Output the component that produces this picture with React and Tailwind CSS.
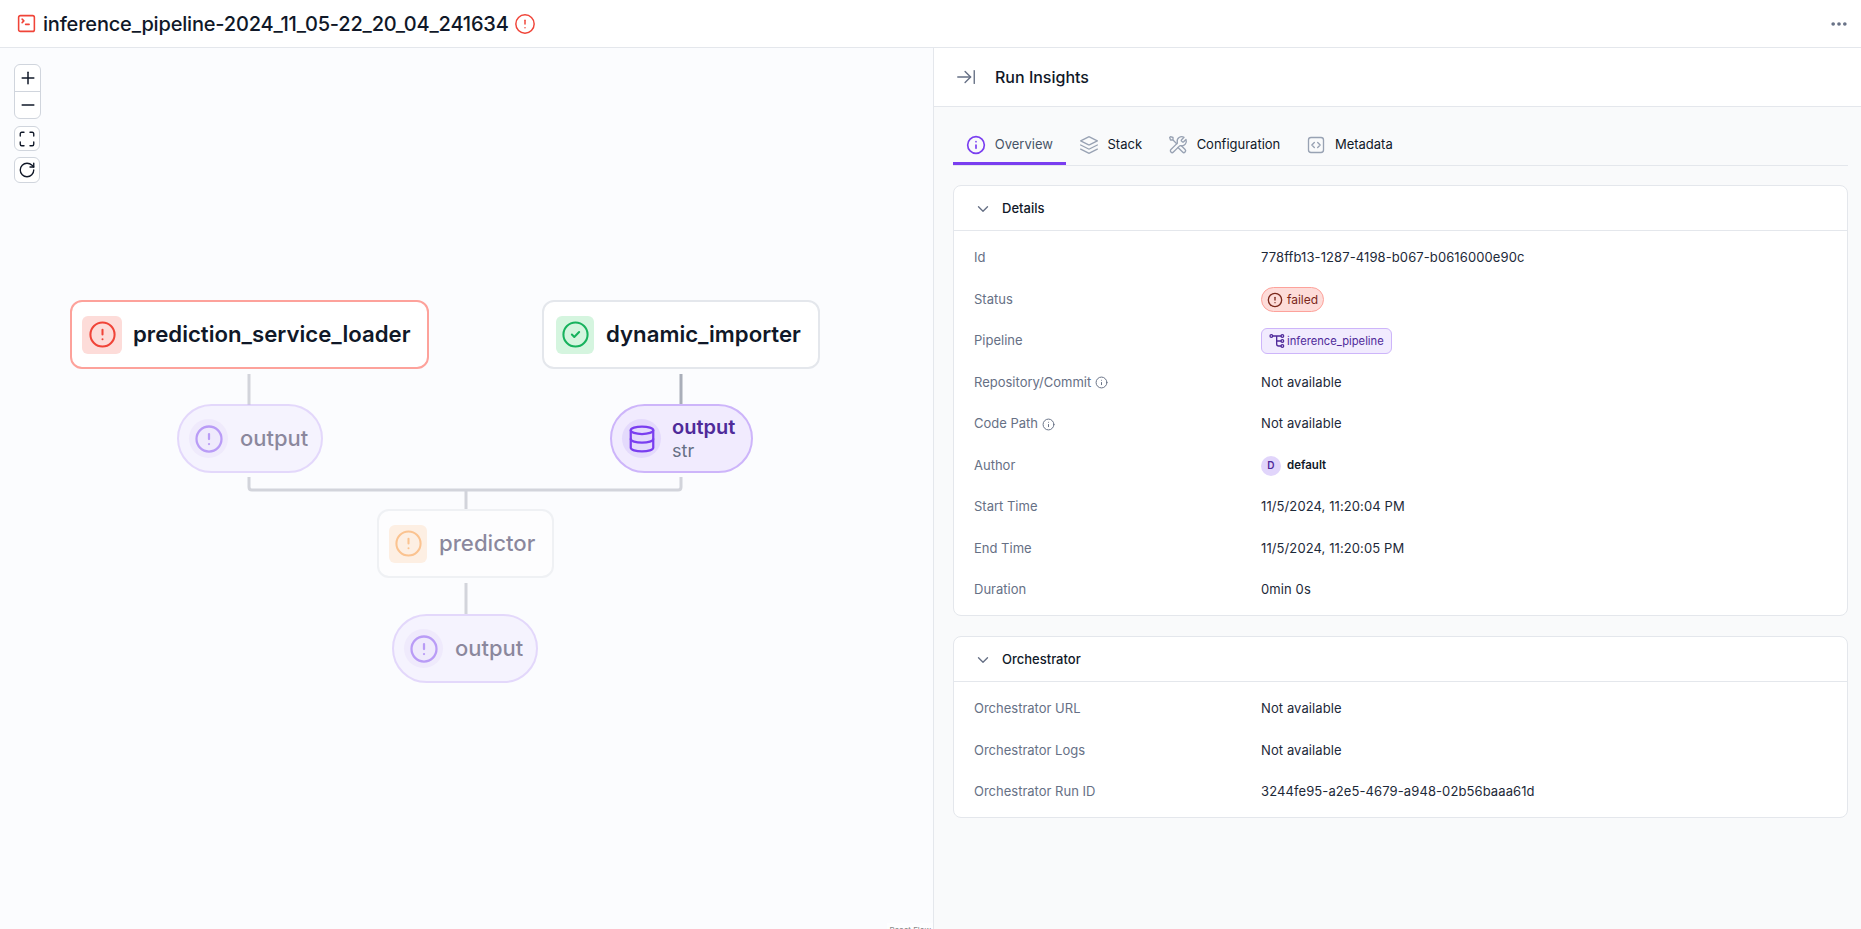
import React from 'react';
import {
  ArrowRightToLine,
  ChevronDown,
  CircleAlert,
  CircleCheck,
  Database,
  Ellipsis,
  Info,
  Maximize,
  Minus,
  Plus,
  RotateCw,
  SquareTerminal,
} from 'lucide-react';

const fontStyle = "font-['Inter','Noto_Sans',sans-serif]";

function LayersIcon({ className }) {
  return (
    <svg className={className} viewBox="0 0 24 24" fill="none" stroke="currentColor" strokeWidth="1.6" strokeLinecap="round" strokeLinejoin="round">
      <path d="M2 12l9.6 4.8c.2.1.6.1.8 0L22 12" />
      <path d="M2 17l9.6 4.8c.2.1.6.1.8 0L22 17" />
      <path d="M2 7l9.6-4.8c.2-.1.6-.1.8 0L22 7l-9.6 4.8c-.2.1-.6.1-.8 0L2 7Z" />
    </svg>
  );
}

function ToolIcon({ className }) {
  return (
    <svg className={className} viewBox="0 0 24 24" fill="none" stroke="currentColor" strokeWidth="1.6" strokeLinecap="round" strokeLinejoin="round">
      <path d="M6 6l4.5 4.5M6 6H3L2 3l1-1 3 1v3Z" />
      <path d="M19.26 2.74l-2.63 2.63c-.4.4-.59.59-.67.82a1 1 0 0 0 0 .62c.08.23.27.43.67.82l.24.24c.4.4.59.59.82.67a1 1 0 0 0 .62 0c.23-.08.43-.27.82-.67l2.46-2.46A5.5 5.5 0 0 1 15.43 12.9c-.49-.1-.73-.14-.88-.13-.16.02-.23.04-.37.11-.13.07-.26.2-.52.46L6.5 20.5a2.12 2.12 0 0 1-3-3l7.16-7.16c.26-.26.39-.39.46-.52.07-.14.1-.22.11-.37.01-.15-.03-.39-.13-.88A5.5 5.5 0 0 1 19.26 2.74Z" />
      <path d="M12 15l5.5 5.5a2.12 2.12 0 0 0 3-3l-4.52-4.52" />
    </svg>
  );
}

function CodeSquareIcon({ className }) {
  return (
    <svg className={className} viewBox="0 0 24 24" fill="none" stroke="currentColor" strokeWidth="1.6" strokeLinecap="round" strokeLinejoin="round">
      <rect x="3" y="3" width="18" height="18" rx="3" />
      <path d="M14 15l3-3-3-3M10 9l-3 3 3 3" />
    </svg>
  );
}

function PipelineIcon({ className }) {
  return (
    <svg className={className} viewBox="0 0 24 24" fill="none" stroke="currentColor" strokeWidth="2" strokeLinecap="round" strokeLinejoin="round">
      <circle cx="3.5" cy="4.5" r="2" />
      <circle cx="20" cy="4.5" r="2" />
      <circle cx="20" cy="12" r="2" />
      <circle cx="20" cy="19.5" r="2" />
      <path d="M5.5 4.5H18M11.5 4.5v12c0 1.7 1.3 3 3 3H18M11.5 12H18" />
    </svg>
  );
}

function Row({ label, info, children }) {
  return (
    <div className="flex h-5 items-center text-[13px]">
      <div className="flex w-[287px] items-center gap-1 text-[#667085]">
        {label}
        {info && <Info className="h-[13px] w-[13px]" strokeWidth={1.8} />}
      </div>
      <div className="flex items-center tracking-[0.1px] text-[#1d2939]">{children}</div>
    </div>
  );
}

function Card({ title, children }) {
  return (
    <div className="rounded-lg border border-[#e4e7ec] bg-white">
      <div className="flex h-[45px] items-center gap-[10px] border-b border-[#e4e7ec] pt-px pl-5">
        <ChevronDown className="h-[18px] w-[18px] text-[#667085]" strokeWidth={1.8} />
        <span className="text-[13px] font-medium text-[#101828]">{title}</span>
      </div>
      <div className="flex flex-col gap-[21.5px] px-5 pt-[17px] pb-[15px]">{children}</div>
    </div>
  );
}

function Tab({ icon: Icon, label, active }) {
  return (
    <div className={`flex h-[46px] items-center gap-[9px] border-b-[3px] px-[12.8px] pt-2 text-[13px] ${active ? 'border-[#7a3ef0] text-[#475467]' : 'border-transparent text-[#101828]'}`}>
      <Icon className={`h-5 w-5 ${active ? 'text-[#7a3ef0]' : 'text-[#98a2b3]'}`} />
      <span>{label}</span>
    </div>
  );
}

function StepNode({ position, border, boxClass, iconClass, icon: Icon, label, faded, textClass }) {
  return (
    <div className={`absolute flex h-[69px] items-center rounded-xl border-2 bg-white ${position} ${border} ${faded ? 'opacity-50' : ''}`}>
      <div className={`flex h-[38px] items-center justify-center rounded-md ${boxClass}`}>
        <Icon className={`h-[29px] w-[29px] ${iconClass}`} strokeWidth={1.7} />
      </div>
      <span className={`pb-[2px] text-[22.2px] leading-7 ${textClass}`}>{label}</span>
    </div>
  );
}

function OutputNode({ position, faded, icon: Icon, sub }) {
  return (
    <div className={`absolute flex h-[69px] items-center rounded-full border-2 border-[#cdb5fa] bg-[#f1ebfe] pl-[10px] ${position} ${faded ? 'opacity-50' : ''}`}>
      <div className="flex h-[39px] w-[39px] items-center justify-center rounded-full bg-[#e4dafc]">
        <Icon className="h-[30px] w-[30px] text-[#7a3ef0]" strokeWidth={1.8} />
      </div>
      {sub ? (
        <div className="ml-[11px] flex flex-col">
          <span className="text-xl leading-6 font-semibold text-[#4f2a9a]">output</span>
          <span className="text-lg leading-6 text-[#667085]">{sub}</span>
        </div>
      ) : (
        <span className="ml-3 pb-[2px] text-[22px] leading-7 font-medium text-[#1c1540]">output</span>
      )}
    </div>
  );
}

export default function App() {
  return (
    <div className={`flex h-[929px] w-full flex-col overflow-hidden bg-white ${fontStyle}`}>
      {/* Top bar */}
      <header className="flex h-12 shrink-0 items-center justify-between border-b border-[#e4e7ec] pr-3 pl-4">
        <div className="flex items-center">
          <SquareTerminal className="h-[21px] w-[21px] text-[#f04438]" strokeWidth={1.8} />
          <h1 className="ml-[6px] text-xl font-medium tracking-[-0.18px] text-[#101828]">inference_pipeline-2024_11_05-22_20_04_241634</h1>
          <CircleAlert className="ml-[5px] h-[22px] w-[22px] text-[#f04438]" strokeWidth={1.6} />
        </div>
        <Ellipsis className="h-5 w-5 text-[#667085]" strokeWidth={2.4} />
      </header>

      <div className="flex min-h-0 flex-1">
        {/* DAG canvas */}
        <div className="relative w-[934px] shrink-0 border-r border-[#e4e7ec] bg-[#fbfcfe]">
          <div className="absolute top-4 left-[14px] flex flex-col text-[#101828]">
            <div className="flex w-[27px] flex-col rounded-md border border-[#d0d5dd] bg-white">
              <div className="flex h-[27px] items-center justify-center border-b border-[#d0d5dd]"><Plus className="h-5 w-5" strokeWidth={1.8} /></div>
              <div className="flex h-[26px] items-center justify-center"><Minus className="h-5 w-5" strokeWidth={1.8} /></div>
            </div>
            <div className="mt-[7px] flex h-[25px] w-[26px] items-center justify-center rounded-md border border-[#d0d5dd] bg-white"><Maximize className="h-[18px] w-[18px]" strokeWidth={1.8} /></div>
            <div className="mt-[6px] flex h-[26px] w-[26px] items-center justify-center rounded-md border border-[#d0d5dd] bg-white"><RotateCw className="h-[18px] w-[18px]" strokeWidth={1.8} /></div>
          </div>

          <svg className="absolute inset-0 h-full w-full" fill="none">
            <g stroke="#d2d4db" strokeWidth="3">
              <path d="M249 326V357" />
              <path d="M249 429V439Q249 442 252 442H678Q681 442 681 439V429" />
              <path d="M466 442V461" />
              <path d="M466 535V566" />
            </g>
            <path d="M681 326V357" stroke="#a9aeb9" strokeWidth="3" />
          </svg>

          <StepNode position="left-[70px] top-[252px] w-[359px]" border="border-[#fda29b]" boxClass="ml-[10px] w-10 bg-[#fddcd9]" iconClass="text-[#f04438]" icon={CircleAlert} label="prediction_service_loader" textClass="ml-[11px] font-semibold text-[#101828]" />
          <StepNode position="left-[542px] top-[252px] w-[278px]" border="border-[#e4e7ec]" boxClass="ml-3 w-[38px] bg-[#d5f5df]" iconClass="text-[#17b25d]" icon={CircleCheck} label="dynamic_importer" textClass="ml-3 font-semibold text-[#101828]" />
          <StepNode faded position="left-[377px] top-[461px] w-[177px]" border="border-[#e4e7ec]" boxClass="ml-[10px] w-[38px] bg-[#ffe3c9]" iconClass="text-[#fb8b24]" icon={CircleAlert} label="predictor" textClass="ml-3 font-medium text-[#1c1540]" />

          <OutputNode faded position="left-[177px] top-[356px] w-[146px]" icon={CircleAlert} />
          <OutputNode position="left-[610px] top-[356px] w-[143px]" icon={Database} sub="str" />
          <OutputNode faded position="left-[392px] top-[566px] w-[146px]" icon={CircleAlert} />

          <div className="absolute right-0 bottom-[-8px] bg-white/50 px-[2px] text-[8px] leading-[14px] text-[#888888]">React Flow</div>
        </div>

        {/* Sidebar */}
        <div className="flex min-w-0 flex-1 flex-col bg-[#f9fafb]">
          <div className="flex h-[59px] shrink-0 items-center border-b border-[#e4e7ec] bg-white pl-[21px]">
            <ArrowRightToLine className="h-[22px] w-[22px] text-[#667085]" strokeWidth={1.5} />
            <span className="ml-[18px] text-base font-medium text-[#101828]">Run Insights</span>
          </div>

          <div className="flex flex-col pt-3 pr-[13px] pl-[19px]">
            <div className="flex border-b border-[#e4e7ec]">
              <Tab icon={Info} label="Overview" active />
              <Tab icon={LayersIcon} label="Stack" />
              <Tab icon={ToolIcon} label="Configuration" />
              <Tab icon={CodeSquareIcon} label="Metadata" />
            </div>

            <div className="mt-[19px] flex flex-col gap-5">
              <Card title="Details">
                <Row label="Id">778ffb13-1287-4198-b067-b0616000e90c</Row>
                <Row label="Status">
                  <span className="flex h-[25px] w-[63px] items-center justify-center gap-1 rounded-full border border-[#fda29b] bg-[#fddcd9] text-xs tracking-normal text-[#7a271a]">
                    <CircleAlert className="h-4 w-4" strokeWidth={2} />
                    failed
                  </span>
                </Row>
                <Row label="Pipeline">
                  <span className="flex h-[26px] items-center gap-[2px] rounded-md border border-[#cdb5fa] bg-[#f1ebfe] px-[7px] text-[11.2px] tracking-normal text-[#4f2a9a]">
                    <PipelineIcon className="h-4 w-4" />
                    inference_pipeline
                  </span>
                </Row>
                <Row label="Repository/Commit" info>Not available</Row>
                <Row label="Code Path" info>Not available</Row>
                <Row label="Author">
                  <span className="flex items-center gap-[6px]">
                    <span className="flex h-5 w-5 items-center justify-center rounded-full bg-[#e1d5fb] text-[10px] font-semibold text-[#4f2a9a]">D</span>
                    <span className="text-[11.5px] font-semibold tracking-normal text-[#101828]">default</span>
                  </span>
                </Row>
                <Row label="Start Time">11/5/2024, 11:20:04 PM</Row>
                <Row label="End Time">11/5/2024, 11:20:05 PM</Row>
                <Row label="Duration">0min 0s</Row>
              </Card>

              <Card title="Orchestrator">
                <Row label="Orchestrator URL">Not available</Row>
                <Row label="Orchestrator Logs">Not available</Row>
                <Row label="Orchestrator Run ID">3244fe95-a2e5-4679-a948-02b56baaa61d</Row>
              </Card>
            </div>
          </div>
        </div>
      </div>
    </div>
  );
}
